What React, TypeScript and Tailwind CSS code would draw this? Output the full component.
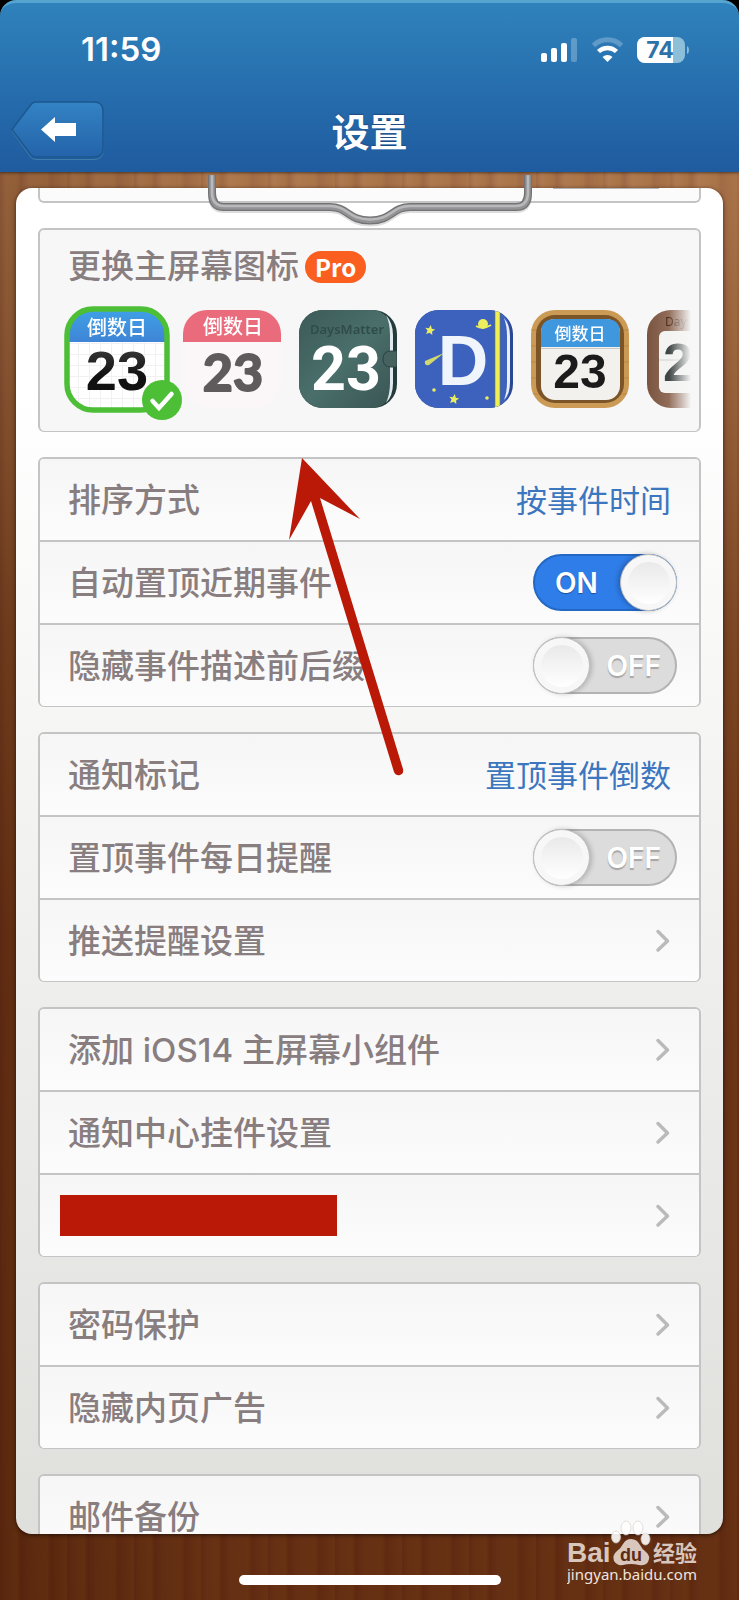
import type { ReactNode } from "react"

type RowProps = {
  label?: string
  value?: string
  toggle?: "on" | "off"
  redacted?: boolean
}

const groups: RowProps[][] = [
  [
    { label: "排序方式", value: "按事件时间" },
    { label: "自动置顶近期事件", toggle: "on" },
    { label: "隐藏事件描述前后缀", toggle: "off" },
  ],
  [
    { label: "通知标记", value: "置顶事件倒数" },
    { label: "置顶事件每日提醒", toggle: "off" },
    { label: "推送提醒设置" },
  ],
  [{ label: "添加 iOS14 主屏幕小组件" }, { label: "通知中心挂件设置" }, { redacted: true }],
  [{ label: "密码保护" }, { label: "隐藏内页广告" }],
  [{ label: "邮件备份" }],
]

function StatusIcons() {
  return (
    <svg width="148" height="28" viewBox="0 0 148 28" aria-hidden="true">
      <g fill="#fff">
        <rect x="0" y="17" width="6" height="9" rx="2" />
        <rect x="10" y="12" width="6" height="14" rx="2" />
        <rect x="20" y="7" width="6" height="19" rx="2" />
        <rect x="30" y="2" width="6" height="24" rx="2" opacity=".25" />
      </g>
      <g fill="none" stroke="#fff" strokeWidth="5">
        <path d="M52.5 9.5a20 20 0 0 1 28 0" opacity=".25" />
        <path d="M57.500 15.500a13 13 0 0 1 18 0" strokeWidth="4.500" />
      </g>
      <path d="M61.500 21a7.500 7.500 0 0 1 10 0l-5 5z" fill="#fff" />
      <clipPath id="battery">
        <rect x="96" y="1" width="48" height="26" rx="8" />
      </clipPath>
      <g clipPath="url(#battery)">
        <rect x="96" y="1" width="48" height="26" fill="#8dbfd9" />
        <rect x="96" y="1" width="36" height="26" fill="#fff" />
      </g>
      <path d="M146 10q2 1 2 4t-2 4z" fill="#8dbfd9" />
      <text x="119" y="22" textAnchor="middle" fontFamily="Inter, sans-serif" fontWeight="700" fontSize="23" fill="#2d72a8">
        74
      </text>
    </svg>
  )
}

function BackIcon() {
  return (
    <svg width="94" height="60" viewBox="0 0 94 60" aria-hidden="true">
      <defs>
        <linearGradient id="back" x1="0" y1="0" x2="0" y2="1">
          <stop offset="0" stopColor="#3383c3" />
          <stop offset="1" stopColor="#2463a9" />
        </linearGradient>
      </defs>
      <path d="M25 3.500h58q9 0 9 9v38q0 9-9 9H25q-3 0-5-2L1 31l19-25q2-2.500 5-2.500z" fill="none" stroke="#3f7ea8" />
      <path d="M25 2h58q9 0 9 9v37q0 9-9 9H25q-3 0-5-2L1 29.500 20 4.500Q22 2 25 2z" fill="url(#back)" stroke="#1c5791" strokeWidth="1.500" />
      <path d="M30 29.500 44 17v6h21v13H44v6z" fill="#fff" />
    </svg>
  )
}

// Wire clip that holds the paper on the board
function Clip() {
  const wire = "M5 0V18Q5 32 17 32H123C141 32 141 45.500 163 45.500S185 32 203 32H309Q321 32 321 18V0"
  return (
    <svg
      className="pointer-events-none absolute left-1/2 top-[3px] -translate-x-1/2"
      width="326"
      height="52"
      viewBox="0 0 326 52"
      fill="none"
      aria-hidden="true"
    >
      <path d={wire} stroke="#00000022" strokeWidth="8" transform="translate(0 2)" />
      <path d={wire} stroke="#737375" strokeWidth="8" />
      <path d={wire} stroke="#939395" strokeWidth="5.500" />
      <path d={wire} stroke="#b9b9bb" strokeWidth="2.500" transform="translate(0 -1)" />
    </svg>
  )
}

function Toggle({ label, defaultOn }: { label: string; defaultOn: boolean }) {
  return (
    <label className="relative block h-[57px] w-[144px] shrink-0 cursor-pointer">
      <input
        type="checkbox"
        role="switch"
        aria-label={label}
        defaultChecked={defaultOn}
        className="peer block h-full w-full appearance-none rounded-full border-2 border-[#b3b3b3] bg-[#dcdcdc] checked:border-[#2368c4] checked:bg-[#2f7de9]"
      />
      <span className="absolute left-[22px] top-0 hidden text-[28px] font-semibold leading-[58px] text-white [text-shadow:0_1px_1px_#1d4f9a] peer-checked:block">
        ON
      </span>
      <span className="absolute right-4 top-0 text-[28px] font-semibold leading-[58px] text-white [text-shadow:0_2px_1px_#a5a5a5] peer-checked:hidden">
        OFF
      </span>
      <span className="absolute left-0 top-0 flex size-[57px] items-center justify-center rounded-full border border-[#c0c0c0] bg-[#f7f7f7] shadow-[2px_0_5px_rgba(0,0,0,0.2)] peer-checked:left-auto peer-checked:right-0 peer-checked:shadow-[-2px_0_5px_rgba(0,0,0,0.25)]">
        <span className="size-[42px] rounded-full bg-linear-to-b from-[#e9e9e9] to-white" />
      </span>
    </label>
  )
}

function Chevron() {
  return (
    <svg className="mr-[6px] shrink-0" width="16" height="24" viewBox="0 0 16 24" fill="none" aria-hidden="true">
      <path d="M3 2.500l9.500 9.500L3 21" stroke="#bababa" strokeWidth="3.500" strokeLinecap="round" strokeLinejoin="round" />
    </svg>
  )
}

function Row({ label, value, toggle, redacted }: RowProps) {
  const look =
    "flex h-[83px] w-full items-center justify-between border-b-2 border-[#c4c4c4] bg-linear-to-b from-[#f6f6f6] to-[#fcfcfc] pl-7 pr-[22px] text-left last:h-[81px] last:border-b-0"
  const name = redacted ? (
    <span className="-ml-2 h-[41px] w-[277px] bg-[#ba1907]" />
  ) : (
    <span className="pt-px text-[33px] font-medium leading-none text-[#887d7f]">{label}</span>
  )

  if (toggle) {
    return (
      <div className={look}>
        {name}
        <Toggle label={label || ""} defaultOn={toggle === "on"} />
      </div>
    )
  }

  return (
    <button type="button" className={look}>
      {name}
      {value ? <span className="mr-[6px] pt-px text-[31px] leading-none text-[#3c76bf]">{value}</span> : <Chevron />}
    </button>
  )
}

function Card({ children }: { children: ReactNode }) {
  return (
    <section className="shrink-0 overflow-hidden rounded-md border-2 border-b border-[#c4c4c4] bg-[#f7f7f7]">
      {children}
    </section>
  )
}

function AppIcon({ name, children }: { name: string; children: ReactNode }) {
  return (
    <button type="button" aria-label={name} className="shrink-0">
      <svg className="block overflow-visible" width="98" height="98" viewBox="0 0 98 98">
        {children}
      </svg>
    </button>
  )
}

const cjk = "'Noto Sans CJK SC', sans-serif"
const arial = "'Liberation Sans', Arial, sans-serif"

function IconPicker() {
  return (
    <div className="mt-[21px] flex gap-[18px] overflow-hidden pb-4 pl-1 pt-[6px] -ml-[5px] [mask-image:linear-gradient(to_right,black_calc(100%-22px),transparent)]">
      <svg width="0" height="0" className="absolute" aria-hidden="true">
        <defs>
          <clipPath id="tile">
            <rect width="98" height="98" rx="24" />
          </clipPath>
          <linearGradient id="sky" x1="0" y1="0" x2="0" y2="1">
            <stop offset="0" stopColor="#3fa0e6" />
            <stop offset="1" stopColor="#3f84d6" />
          </linearGradient>
          <linearGradient id="ink" x1="0" y1="0" x2="0" y2="1">
            <stop offset="0" stopColor="#454545" />
            <stop offset=".6" stopColor="#111" />
          </linearGradient>
          <linearGradient id="leather" x1="0" y1="0" x2="1" y2="1">
            <stop offset="0" stopColor="#3c5a58" />
            <stop offset=".5" stopColor="#4a6f6b" />
            <stop offset="1" stopColor="#3a5553" />
          </linearGradient>
          <linearGradient id="walnut" x1="0" y1="0" x2="1" y2="0">
            <stop offset="0" stopColor="#79543f" />
            <stop offset=".25" stopColor="#94705d" />
            <stop offset=".6" stopColor="#7d5845" />
          </linearGradient>
          <pattern id="grid" width="11" height="11" patternUnits="userSpaceOnUse">
            <path d="M0 .5h11M.5 0v11" stroke="#f1f1f3" fill="none" />
          </pattern>
          <path id="star" d="M0-5 1.500-1.600 5-1.400 2.300 1 3.200 4.600 0 2.700-3.200 4.600-2.300 1-5-1.400-1.500-1.600z" />
        </defs>
      </svg>

      <AppIcon name="默认图标">
        <g clipPath="url(#tile)">
          <rect width="98" height="98" fill="#fff" />
          <rect y="32" width="98" height="66" fill="url(#grid)" />
          <rect width="98" height="32" fill="url(#sky)" />
        </g>
        <text x="50" y="25" textAnchor="middle" fontFamily={cjk} fontWeight="500" fontSize="20" fill="#fff">倒数日</text>
        <text x="50" y="80" textAnchor="middle" fontFamily={arial} fontWeight="700" fontSize="56" fill="url(#ink)">23</text>
        <rect x="0" y="-1" width="100" height="101" rx="26" fill="none" stroke="#4cbf37" strokeWidth="5.500" />
        <circle cx="95" cy="90" r="20" fill="#4cbf37" />
        <path d="M85.500 91l6.500 7 12.500-14" fill="none" stroke="#fff" strokeWidth="4.500" strokeLinecap="round" />
      </AppIcon>

      <AppIcon name="粉色图标">
        <g clipPath="url(#tile)">
          <rect width="98" height="98" fill="#fbf7f8" />
          <rect width="98" height="32" fill="#ea6b7b" />
        </g>
        <text x="50" y="24" textAnchor="middle" fontFamily={cjk} fontWeight="500" fontSize="20" fill="#fff">倒数日</text>
        <text x="50" y="81" textAnchor="middle" fontFamily="Lato, sans-serif" fontWeight="700" fontSize="52" fill="#5f5b5c" stroke="#5f5b5c" strokeWidth="2" strokeLinejoin="round">23</text>
      </AppIcon>

      <AppIcon name="皮革图标">
        <g clipPath="url(#tile)">
          <rect width="98" height="98" fill="#243b3c" />
          <path d="M0 0h76q16 4 16 22v54q0 18-16 22H0z" fill="url(#leather)" />
          <path d="M87 5q7 8 7 20v48q0 13-7 20 4-9 4-20V25q0-12-4-20z" fill="#dfe9ee" />
          <path d="M98 41h-6q-8 0-8 8t8 8h6z" fill="#45625f" stroke="#2a4343" />
        </g>
        <text x="48" y="24" textAnchor="middle" fontFamily="'Noto Sans', sans-serif" fontWeight="600" fontSize="13" fill="#2f4c4b">DaysMatter</text>
        <text x="47" y="80" textAnchor="middle" fontFamily="Roboto, sans-serif" fontWeight="700" fontSize="61" fill="#fff">23</text>
      </AppIcon>

      <AppIcon name="星空图标">
        <g clipPath="url(#tile)">
          <rect width="98" height="98" fill="#2a4796" />
          <path d="M0 0h82q13 6 13 24v50q0 18-13 24H0z" fill="#3c62bd" />
          <rect x="80" width="5" height="98" fill="#f0ee55" stroke="#6b7b4a" strokeWidth=".6" />
          <path d="M89 8q6 7 6 18v46q0 12-6 18 3-8 3-18V26q0-10-3-18z" fill="#e8eefb" />
        </g>
        <g fill="#ecee5e">
          <use href="#star" x="15" y="20" transform="rotate(10 15 20)" />
          <use href="#star" x="39" y="89" transform="rotate(10 39 89)" />
          <circle cx="19" cy="80" r="1.800" />
          <circle cx="72" cy="88" r="1.800" />
          <circle cx="68" cy="14" r="5" />
          <path d="M10 51q-1 5 4 4l15-12z" opacity=".85" />
        </g>
        <path d="M61 16q7 4 15-1" fill="none" stroke="#ecee5e" strokeWidth="1.500" />
        <text x="48" y="75" textAnchor="middle" fontFamily={arial} fontWeight="700" fontSize="70" fill="#f0f4fb">D</text>
      </AppIcon>

      <AppIcon name="木框图标">
        <g clipPath="url(#tile)">
          <rect width="98" height="98" fill="#cb9a55" />
          <path d="M0 20h98M0 36h98M0 52h98M0 68h98M0 84h98" stroke="#bb8745" />
        </g>
        <rect x="5" y="5" width="88" height="88" rx="19" fill="#7b5427" />
        <rect x="10" y="9" width="79" height="81" rx="14" fill="#f2f1ee" />
        <path d="M10 37V23Q10 9 24 9h51q14 0 14 14v14z" fill="#3f97de" />
        <path d="M10 38.500h79" stroke="#c9c8c6" />
        <text x="49" y="30" textAnchor="middle" fontFamily={cjk} fontWeight="500" fontSize="17" fill="#fff">倒数日</text>
        <text x="49" y="78" textAnchor="middle" fontFamily={arial} fontWeight="700" fontSize="48" fill="#1b1b1b">23</text>
      </AppIcon>

      <AppIcon name="胡桃木图标">
        <g clipPath="url(#tile)">
          <rect width="98" height="98" fill="url(#walnut)" />
        </g>
        <rect x="12" y="21" width="74" height="62" rx="6" fill="#f3f3f1" />
        <path d="M12 50h74" stroke="#cfd3d2" />
        <text x="18" y="16" fontFamily="'Noto Sans', sans-serif" fontSize="12" fill="#4d3223">DaysMatter</text>
        <text x="16" y="71" fontFamily={arial} fontWeight="700" fontSize="54" fill="#3f4645">23</text>
      </AppIcon>
    </div>
  )
}

function Arrow() {
  return (
    <svg className="pointer-events-none absolute left-[288px] top-[286px]" width="118" height="318" viewBox="0 0 118 318" aria-hidden="true">
      <path d="M14 0 72 61 32 40 115 311Q116 316 112 317T106 314L23 43 1 82z" fill="#ba1907" />
    </svg>
  )
}

function Watermark() {
  return (
    <svg className="pointer-events-none absolute bottom-3 right-9" width="136" height="68" viewBox="0 0 136 68" role="img" aria-label="Baidu 经验">
      <g fill="#d9c6bd">
        <text x="0" y="42" fontFamily={arial} fontWeight="700" fontSize="28">Bai</text>
        <path d="M64 19q6 0 9 6 2 4 6 7 5 4 2 10-3 4-9 3-8-2-16 0-6 1-9-4-2-6 3-10 4-3 6-7 3-5 8-5z" />
        <text x="86" y="41" fontFamily={cjk} fontWeight="700" fontSize="22">经验</text>
        <text x="0" y="60" fontFamily="'Noto Sans', sans-serif" fontSize="15" fill="#efe4df">jingyan.baidu.com</text>
      </g>
      <g fill="#fff" stroke="#d8d2ce" strokeWidth=".8" opacity=".9">
        <ellipse cx="49" cy="17" rx="4.500" ry="6" />
        <ellipse cx="59" cy="8" rx="5" ry="7" />
        <ellipse cx="71" cy="8" rx="5" ry="7" />
        <ellipse cx="78.500" cy="19" rx="4.500" ry="6" />
      </g>
      <text x="64" y="41" textAnchor="middle" fontFamily={arial} fontWeight="700" fontSize="18" fill="#5d2b14">du</text>
    </svg>
  )
}

export default function App() {
  return (
    <div className="h-screen bg-black font-['Inter','Noto_Sans_CJK_SC',sans-serif]">
      <div className="flex h-full flex-col">
        <header className="relative z-10 h-[172px] shrink-0 rounded-t-2xl border-t-3 border-[#55a5d0] bg-linear-to-b from-[#2f82bc] to-[#1f5b9f] shadow-[0_1px_3px_rgba(0,0,0,0.5)]">
          <div className="flex h-[93px] items-center justify-between pl-[81px] pr-[50px]">
            <span className="text-[33px] font-semibold leading-none text-white">11:59</span>
            <StatusIcons />
          </div>
          <nav className="grid h-[68px] grid-cols-[1fr_auto_1fr] items-center">
            <button type="button" aria-label="返回" className="ml-[11px] justify-self-start">
              <BackIcon />
            </button>
            <h1 className="pt-1 text-[38px] font-bold leading-none text-white [text-shadow:0_-1px_1px_#1c4a80]">设置</h1>
          </nav>
        </header>

        <div className="relative flex min-h-0 flex-1 flex-col bg-[repeating-linear-gradient(90deg,rgba(60,0,0,0.12)_0px,rgba(60,0,0,0)_6px,rgba(120,70,10,0.14)_17px,rgba(60,0,0,0.14)_21px,rgba(0,0,0,0)_29px,rgba(120,70,10,0.1)_47px,rgba(60,0,0,0.12)_51px,rgba(130,80,20,0.1)_67px),linear-gradient(90deg,rgba(60,20,0,0.25)_0%,rgba(60,20,0,0)_30%),linear-gradient(180deg,#b07a50_0px,#9c6640_200px,#7d4826_460px,#6c3519_760px,#642f13_100%)] px-4 pt-4">
          <main className="flex min-h-0 flex-1 flex-col gap-[25px] overflow-hidden rounded-2xl bg-linear-to-b from-white from-15% to-[#dfe0dc] px-[22px] shadow-[0_1px_4px_rgba(0,0,0,0.6)]">
            <div className="flex h-[15px] shrink-0 justify-end rounded-b-md border-2 border-t-0 border-[#c4c4c4] bg-[#fbfbfb] pr-10">
              <span className="h-px w-[106px] bg-[#b5b5b5]" />
            </div>

            <Card>
              <div className="h-[201px] pl-7 pr-2 pt-5">
                <h2 className="flex items-center gap-[6px] text-[33px] font-medium leading-[33px] text-[#887d7f]">
                  更换主屏幕图标
                  <span className="flex h-8 items-center rounded-full bg-[#fa5f1f] px-[10px] font-['Noto_Sans_CJK_SC',sans-serif] text-[24px] font-bold leading-none text-white">
                    Pro
                  </span>
                </h2>
                <IconPicker />
              </div>
            </Card>

            {groups.map((rows, i) => (
              <Card key={i}>
                {rows.map((row, j) => (
                  <Row key={j} {...row} />
                ))}
              </Card>
            ))}
          </main>

          <footer className="flex h-[66px] shrink-0 justify-center pt-[41px]">
            <div className="h-[10px] w-[262px] rounded-full bg-white" />
          </footer>

          <Clip />
          <Arrow />
          <Watermark />
        </div>
      </div>
    </div>
  )
}
